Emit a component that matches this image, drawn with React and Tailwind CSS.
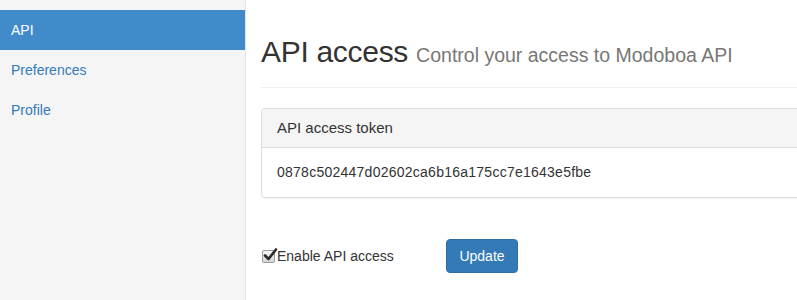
import React, { useState } from 'react';

const menu = [
    { id: 'api', label: 'API' },
    { id: 'preferences', label: 'Preferences' },
    { id: 'profile', label: 'Profile' },
];

function Sidebar({ selected, onSelect }) {
    return (
        <div className="w-[246px] shrink-0 h-full bg-[#f5f5f5] border-r border-[#e3e3e3] pt-[10px]">
            {menu.map((item) => (
                <button
                    key={item.id}
                    onClick={() => onSelect(item.id)}
                    className={`block w-full h-[40px] text-left px-[11px] text-[14px] leading-[40px]
                        ${selected === item.id ? 'bg-[#428bca] text-white' : 'text-[#337ab7]'}`}
                >
                    {item.label}
                </button>
            ))}
        </div>
    );
}

function CheckBox({ checked, onChange }) {
    return (
        <span
            onClick={onChange}
            className="relative inline-block w-[13px] h-[13px] mt-[1px] rounded-[2px] border border-[#9a9a9a] bg-gradient-to-b from-[#f4f4f4] to-[#d9d9d9] cursor-pointer"
        >
            {checked && (
                <svg className="absolute left-[0px] top-[-3px]" width="15" height="14" viewBox="0 0 15 14">
                    <path d="M2 7.5 L5.5 11 L13 1.5" fill="none" stroke="#2a2a2a" strokeWidth="2.6" strokeLinecap="round" strokeLinejoin="round" />
                </svg>
            )}
        </span>
    );
}

export default function App() {
    const [selected, setSelected] = useState('api');
    const [enabled, setEnabled] = useState(true);

    return (
        <div
            className="flex w-[797px] h-[300px] overflow-hidden bg-white text-[#333]"
            style={{ fontFamily: '"Liberation Sans", Arial, sans-serif' }}
        >
            <Sidebar selected={selected} onSelect={setSelected} />

            <div className="flex-1 pl-[15px]">
                <div className="w-[560px]">
                    {/* Page header */}
                    <div className="mt-[35px] pb-[19px] border-b border-[#eee]">
                        <h1 className="text-[30px] leading-[33px] tracking-[-0.3px] text-[#333]">
                            API access{' '}
                            <small className="text-[19.5px] leading-none tracking-normal text-[#777]">Control your access to Modoboa API</small>
                        </h1>
                    </div>

                    {/* Token panel */}
                    <div className="mt-[20px] border border-[#ddd] rounded-[4px] shadow-[0_1px_1px_rgba(0,0,0,0.05)]">
                        <div className="h-[39px] px-[15px] flex items-center bg-[#f5f5f5] border-b border-[#ddd] rounded-t-[4px] text-[15px]">
                            API access token
                        </div>
                        <div className="h-[49px] px-[15px] flex items-center text-[14px] tracking-[0.25px]">
                            0878c502447d02602ca6b16a175cc7e1643e5fbe
                        </div>
                    </div>

                    {/* Form row */}
                    <div className="mt-[41px] flex items-center">
                        <label className="flex items-center w-[185px] pl-[1px] text-[14px]">
                            <CheckBox checked={enabled} onChange={() => setEnabled(!enabled)} />
                            <span className="ml-[2px]">Enable API access</span>
                        </label>
                        <button className="w-[72px] h-[34px] rounded-[4px] bg-[#337ab7] border border-[#2e6da4] text-white text-[14px]">
                            Update
                        </button>
                    </div>
                </div>
            </div>
        </div>
    );
}
